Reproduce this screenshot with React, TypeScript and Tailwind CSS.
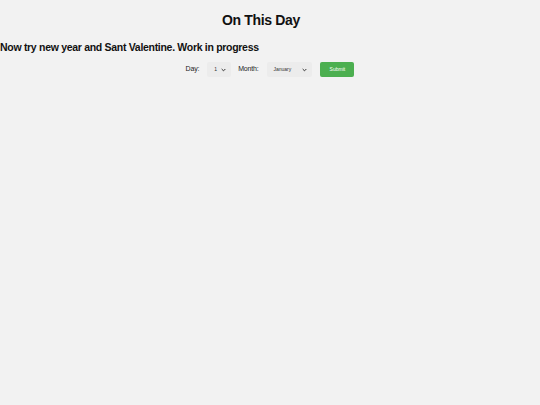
import { useState } from "react";

const MONTHS = [
  "January", "February", "March", "April", "May", "June",
  "July", "August", "September", "October", "November", "December",
];

function Chevron() {
  return (
    <svg width="5" height="4" viewBox="0 0 6 4" className="pointer-events-none absolute right-[5px] top-[6px]">
      <path d="M0.8 0.8 L3 3 L5.2 0.8" fill="none" stroke="#333" strokeWidth="1.2" />
    </svg>
  );
}

export default function App() {
  const [day, setDay] = useState("1");
  const [month, setMonth] = useState("January");

  return (
    <div className="min-h-[405px] w-full bg-[#f2f2f2] text-[#111] font-['Liberation_Sans',Arial,sans-serif]">
      <h1 className="pt-[11px] pr-[18px] text-center text-[14px] font-bold leading-[18px] tracking-[-0.35px]">On This Day</h1>
      <h2 className="mt-[11px] text-[10.5px] font-bold leading-[14px] tracking-[-0.3px]">
        Now try new year and Sant Valentine. Work in progress
      </h2>

      <form className="mt-[8px] flex items-center justify-center" onSubmit={(e) => e.preventDefault()}>
        <label className="mr-[8px] text-[7px] tracking-[-0.2px] text-[#222]">Day:</label>
        <div className="relative mr-[7px] h-[15px]">
          <select
            value={day}
            onChange={(e) => setDay(e.target.value)}
            className="block h-[15px] w-[24px] appearance-none rounded-[2px] bg-[#ececec] py-0 pl-[7px] text-[5px] leading-[15px] text-[#333] outline-none"
          >
            {Array.from({ length: 31 }, (_, i) => (
              <option key={i + 1} value={String(i + 1)}>{i + 1}</option>
            ))}
          </select>
          <Chevron />
        </div>
        <label className="mr-[9px] text-[7px] tracking-[-0.2px] text-[#222]">Month:</label>
        <div className="relative mr-[8px] h-[15px]">
          <select
            value={month}
            onChange={(e) => setMonth(e.target.value)}
            className="block h-[15px] w-[45px] appearance-none rounded-[2px] bg-[#ececec] py-0 pl-[6px] text-[5px] leading-[15px] text-[#333] outline-none"
          >
            {MONTHS.map((m) => (
              <option key={m} value={m}>{m}</option>
            ))}
          </select>
          <Chevron />
        </div>
        <button
          type="submit"
          className="h-[15px] w-[34px] rounded-[2px] bg-[#4caf50] text-[5px] leading-[15px] text-white"
        >
          Submit
        </button>
      </form>
    </div>
  );
}
